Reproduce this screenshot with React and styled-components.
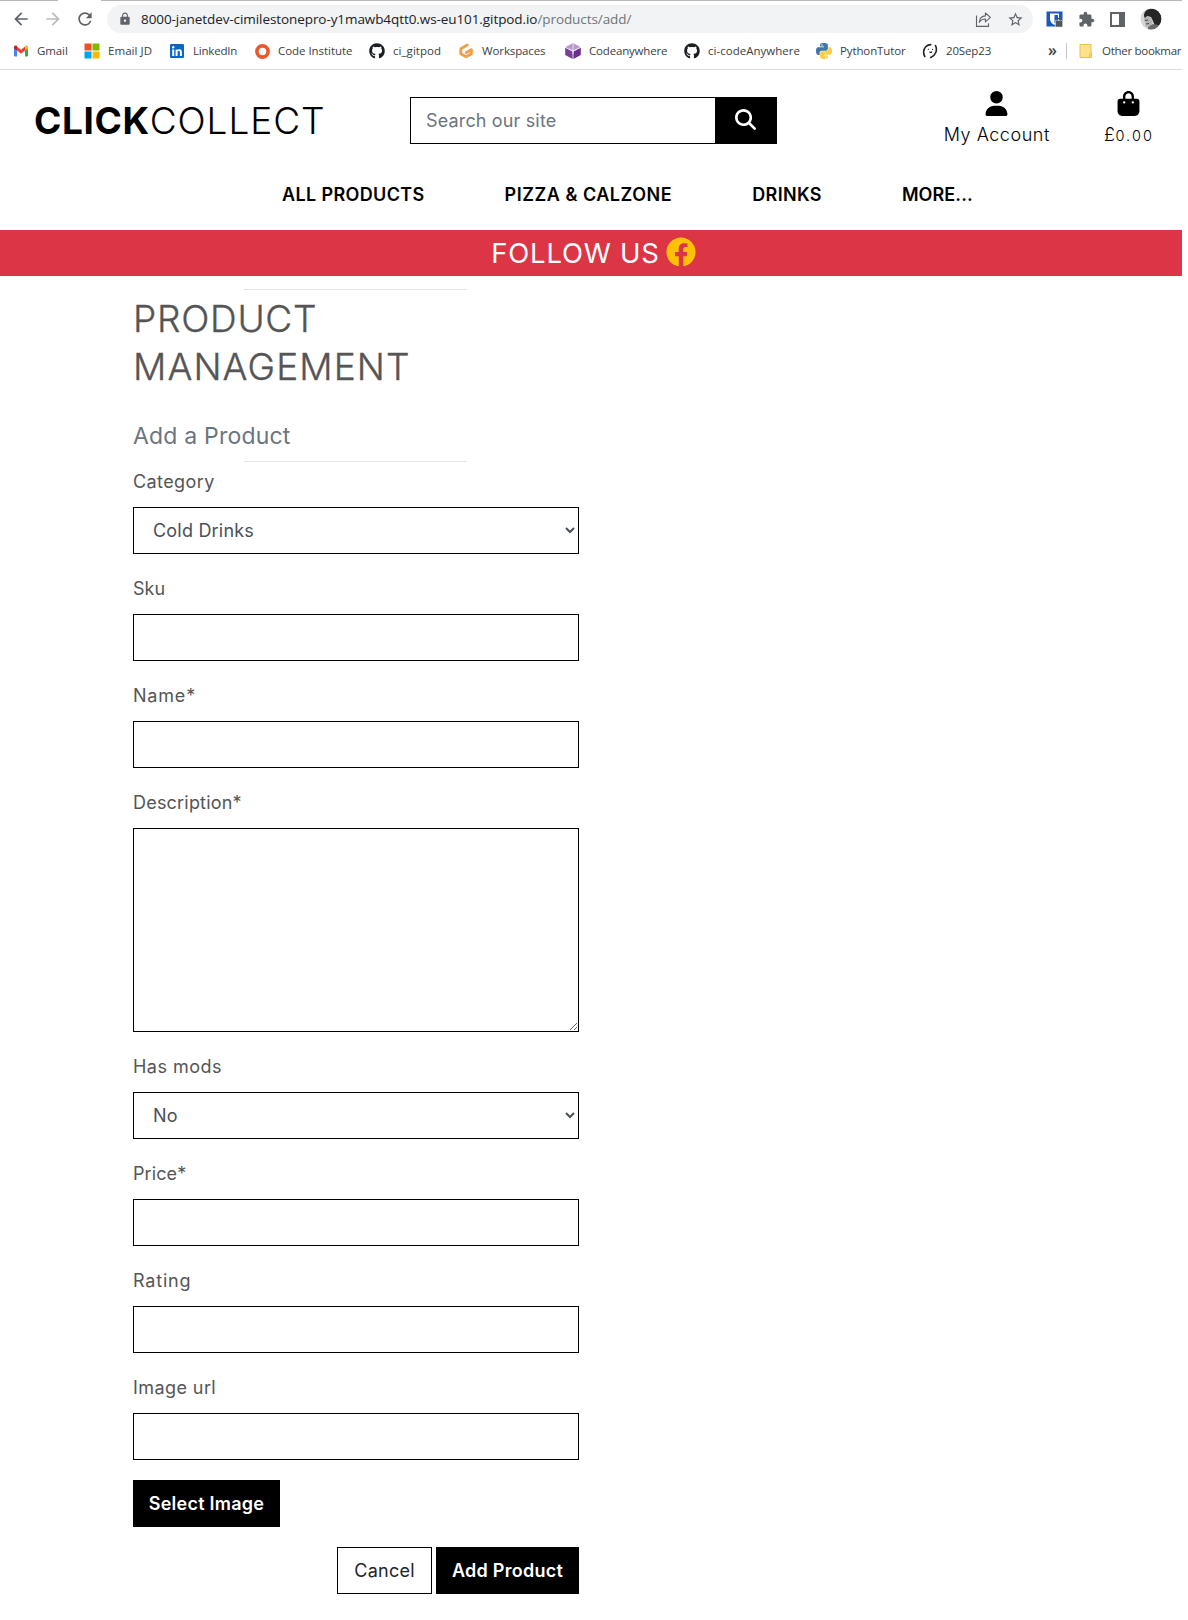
import React from "react";
import styled, { createGlobalStyle } from "styled-components";
import { FaFacebook, FaGithub } from "react-icons/fa";
import { FaUser, FaBagShopping, FaMagnifyingGlass } from "react-icons/fa6";
import {
  MdArrowBack,
  MdArrowForward,
  MdRefresh,
  MdLock,
  MdStarBorder,
  MdExtension,
} from "react-icons/md";

const GlobalStyle = createGlobalStyle`
  *, *::before, *::after { box-sizing: border-box; }
  body {
    margin: 0;
    background: #fff;
    color: #555;
    font-family: Inter, "Liberation Sans", sans-serif;
    font-size: 18px;
    line-height: 27px;
  }
`;

const Page = styled.div`
  width: 1182px;
  min-height: 1620px;
`;

/* ---------- browser bar ---------- */

const Browser = styled.header`
  height: 70px;
  overflow: hidden;
  border-bottom: 1px solid #d9dadc;
  font-family: "Open Sans", "Noto Sans", sans-serif;
`;

const TabEdge = styled.div`
  display: flex;
  justify-content: space-between;
  height: 1px;

  &::before,
  &::after {
    content: "";
    background: #b9b9b9;
    width: 58px;
  }
  &::after {
    width: 1081px;
  }
`;

const Toolbar = styled.div`
  display: flex;
  align-items: center;
  height: 28px;
  margin-top: 4px;
  color: #5f6368;
`;

const NavButtons = styled.div`
  display: flex;
  gap: 12px;
  width: 107px;
  padding-left: 11px;

  svg {
    width: 20px;
    height: 20px;
  }
  svg:nth-child(2) {
    color: #babcbe;
  }
`;

const AddressBar = styled.div`
  display: flex;
  align-items: center;
  width: 926px;
  height: 28px;
  padding: 0 9px 0 11px;
  border-radius: 14px;
  background: #f1f3f4;
`;

const Url = styled.div`
  flex: 1;
  margin-left: 9px;
  font-size: 13.5px;
  line-height: 20px;
  letter-spacing: -0.08px;
  color: #202124;

  span {
    color: #70757a;
  }
`;

const AddressActions = styled.div`
  display: flex;
  align-items: center;
  gap: 15px;
`;

const Extensions = styled.div`
  display: flex;
  align-items: center;
  gap: 15px;
  padding-left: 13px;
`;

const Bookmarks = styled.div`
  display: flex;
  align-items: center;
  height: 36px;
  padding-left: 13px;
  font-size: 11.5px;
  line-height: 16px;
  color: #3c4043;
  white-space: nowrap;
`;

const Bookmark = styled.div`
  display: flex;
  flex: none;
  align-items: center;
  gap: 8px;
  width: ${(p) => p.$w}px;
  letter-spacing: ${(p) => p.$ls || 0}px;

  svg {
    flex: none;
    width: 16px;
    height: 16px;
  }
`;

const More = styled.span`
  width: 19px;
  font-size: 16px;
  font-weight: 600;
  line-height: 14px;
  padding-bottom: 3px;
`;

const Divider = styled.span`
  width: 1px;
  height: 16px;
  margin-right: 11px;
  background: #c6c9cc;
`;

/* ---------- shop header ---------- */

const SiteHeader = styled.div`
  height: 160px;
  padding-top: 27px;
  color: #000;
`;

const HeaderRow = styled.div`
  display: grid;
  grid-template-columns: 376px 367px 1fr;
  grid-template-rows: 47px;
  padding: 0 28px 0 34px;
`;

const Logo = styled.div`
  display: flex;
  align-items: center;
  height: 46px;
  font-size: 37px;
  font-weight: 300;
  letter-spacing: 0.95px;

  strong {
    font-weight: 700;
    letter-spacing: 0.6px;
  }
`;

const SearchForm = styled.form`
  display: flex;
`;

const SearchInput = styled.input`
  flex: 1;
  min-width: 0;
  padding: 0 15px;
  border: 1px solid #000;
  border-right: 0;
  border-radius: 0;
  font: inherit;
  letter-spacing: 0.15px;
  color: #000;

  &::placeholder {
    color: #6c757d;
    opacity: 1;
  }
`;

const SearchButton = styled.button`
  display: flex;
  align-items: center;
  justify-content: center;
  width: 62px;
  padding: 0 1px 2px 0;
  border: 0;
  background: #000;
  color: #fff;

  svg {
    width: 21px;
    height: 21px;
  }
`;

const Actions = styled.div`
  display: flex;
  justify-content: flex-end;
  gap: 54px;
  margin-top: -6px;
  font-weight: 300;
`;

const Action = styled.a`
  display: flex;
  flex-direction: column;
  align-items: center;
  letter-spacing: 0.55px;

  svg {
    flex: none;
    width: 25px;
    height: 25px;
    margin-bottom: 5px;
  }
`;

const Amount = styled.span`
  font-size: 14.5px;
  letter-spacing: 2.1px;
`;

const MainNav = styled.nav`
  display: flex;
  gap: 80px;
  margin-top: 37px;
  padding-left: 282px;
  font-weight: 600;
`;

const NavLink = styled.a`
  letter-spacing: ${(p) => p.$ls}px;
`;

const Banner = styled.div`
  display: flex;
  align-items: center;
  justify-content: center;
  gap: 6px;
  height: 46px;
  padding-left: 27px;
  padding-right: 22px;
  background: #dc3545;
  color: #fff;
  font-size: 27.5px;
  letter-spacing: 0.75px;

  svg {
    width: 30px;
    height: 30px;
    margin-bottom: 2px;
    color: #ffc107;
  }
`;

/* ---------- product form ---------- */

const Content = styled.main`
  width: 446px;
  margin-left: 133px;
  padding-top: 13px;
`;

const Rule = styled.hr`
  width: 50%;
  height: 1px;
  margin: 0 0 0 111px;
  border: 0;
  background: #e4e4e4;
`;

const Title = styled.h2`
  width: 320px;
  margin: 5px 0 0;
  font-size: 37px;
  font-weight: 300;
  line-height: 48px;
  letter-spacing: 1.1px;
  color: #555;
  -webkit-text-stroke: 0.35px #555;

  span {
    letter-spacing: 0.75px;
  }
`;

const Subtitle = styled.h5`
  margin: 31px 0 11px;
  font-size: 23px;
  font-weight: 400;
  line-height: 28px;
  letter-spacing: 0.2px;
  color: #6c757d;
`;

const Form = styled.form`
  padding-top: 6px;
`;

const Field = styled.div`
  display: flex;
  flex-direction: column;
  gap: 12px;
  margin-bottom: ${(p) => p.$gap ?? 21}px;
`;

const Label = styled.label`
  letter-spacing: ${(p) => p.$ls}px;
`;

const Input = styled.input`
  height: 47px;
  padding: 0 15px;
  border: 1px solid #000;
  border-radius: 0;
  background: #fff;
  color: #495057;
  font: inherit;
`;

const Select = styled(Input).attrs({ as: "select" })`
  letter-spacing: 0.2px;
`;

const Textarea = styled(Input).attrs({ as: "textarea" })`
  display: block;
  height: 204px;
  resize: both;
`;

const Button = styled.button`
  height: 47px;
  padding: 0;
  width: ${(p) => p.$w}px;
  border: 1px solid #000;
  border-radius: 0;
  background: ${(p) => (p.$outline ? "#fff" : "#000")};
  color: ${(p) => (p.$outline ? "#212529" : "#fff")};
  font: inherit;
  font-weight: ${(p) => (p.$outline ? 400 : 600)};
  letter-spacing: 0.25px;
`;

const Buttons = styled.div`
  display: flex;
  justify-content: flex-end;
  gap: 4px;
  margin-top: 20px;
`;

/* ---------- icons ---------- */

const GmailIcon = () => (
  <svg viewBox="0 0 16 16">
    <path d="M1 4v8.7c0 .5.4.8.8.8H4V7z" fill="#4285f4" />
    <path d="M15 4v8.7c0 .5-.4.8-.8.8H12V7z" fill="#34a853" />
    <path d="M4 3.6 8 6.7l4-3.1v4L8 10.7 4 7.6z" fill="#ea4335" />
    <path d="M1 4.5c0-1.8 1.8-2.4 3-1.4v4.5L1 5.4z" fill="#c5221f" />
    <path d="M15 4.5c0-1.8-1.8-2.4-3-1.4v4.5l3-2.2z" fill="#fbbc04" />
  </svg>
);

const MicrosoftIcon = () => (
  <svg viewBox="0 0 16 16">
    <path d="M.5.5h7v7h-7z" fill="#f25022" />
    <path d="M8.5.5h7v7h-7z" fill="#7fba00" />
    <path d="M.5 8.5h7v7h-7z" fill="#00a4ef" />
    <path d="M8.5 8.5h7v7h-7z" fill="#ffb900" />
  </svg>
);

const LinkedInIcon = () => (
  <svg viewBox="0 0 16 16">
    <rect x="1" y="1" width="14" height="14" rx="1.2" fill="#0a66c2" />
    <circle cx="4.2" cy="4.3" r="1.2" fill="#fff" />
    <path d="M3.2 6.4h2V13h-2zM6.6 6.4h1.9v.9c.9-1.6 4.4-1.6 4.4 1.5V13h-2V9.5c0-2-2.3-1.8-2.3 0V13h-2z" fill="#fff" />
  </svg>
);

const RingIcon = () => (
  <svg viewBox="0 0 16 16">
    <circle cx="8.5" cy="8.5" r="5.6" fill="none" stroke="#e8572f" strokeWidth="3.6" />
  </svg>
);

const GitpodIcon = () => (
  <svg viewBox="0 0 16 16" fill="none" stroke="#f0a04b" strokeWidth="2.9" strokeLinecap="round" strokeLinejoin="round">
    <path d="M9.3 2 2.8 5.7v5L8 13.8l5.4-3.1V6.7L8.3 9.5" />
  </svg>
);

const CubeIcon = () => (
  <svg viewBox="0 0 16 16">
    <path d="M8 0 15.5 4 8 8 .5 4z" fill="#b79acb" />
    <path d="M.2 4.8 7.6 8.6V16L.2 12z" fill="#7a3f98" />
    <path d="M15.8 4.8 8.4 8.6V16l7.4-4z" fill="#6b3089" />
    <path d="M8 0v8M8 8l-4-2M8 8l4-2M8 8v3" stroke="#efe4f5" strokeWidth=".9" />
  </svg>
);

const snake =
  "M14.25.18l.9.2.73.26.59.3.45.32.34.34.25.34.16.33.1.3.04.26.02.2-.01.13V8.5l-.05.63-.13.55-.21.46-.26.38-.3.31-.33.25-.35.19-.35.14-.33.1-.3.07-.26.04-.21.02H8.77l-.69.05-.59.14-.5.22-.41.27-.33.32-.27.35-.2.36-.15.37-.1.35-.07.32-.04.27-.02.21v3.06H3.17l-.21-.03-.28-.07-.32-.12-.35-.18-.36-.26-.36-.36-.35-.46-.32-.59-.28-.73-.21-.88-.14-1.05-.05-1.23.06-1.22.16-1.04.24-.87.32-.71.36-.57.4-.44.42-.33.42-.24.4-.16.36-.1.32-.05.24-.01h.16l.06.01h8.16v-.83H6.18l-.01-2.75-.02-.37.05-.34.11-.31.17-.28.25-.26.31-.23.38-.2.44-.18.51-.15.58-.12.64-.1.71-.06.77-.04.84-.02 1.27.05z";

const PythonIcon = () => (
  <svg viewBox="0 0 24 24">
    <path d={snake} fill="#3f77a8" />
    <path d={snake} fill="#f9cf47" transform="rotate(180 12 12)" />
    <circle cx="9" cy="3" r="1" fill="#fff" />
    <circle cx="15" cy="21" r="1" fill="#fff" />
  </svg>
);

const SwirlIcon = () => (
  <svg viewBox="0 0 16 16" fill="none" stroke="#222" strokeWidth="1.6" strokeLinecap="round">
    <path d="M8.8 1.6C5 1.600 1.600 5 1.600 9c0 1.800.4 3.200 1.200 4.500" />
    <path d="M13.500 2.500c2.200 4.500.2 10-4.800 12" />
    <path d="M6.300 6.200v.3M7.800 9c.5.500 1.300.5 1.800 0M10.600 6.200v.3" strokeWidth="1.1" />
  </svg>
);

const FolderIcon = () => (
  <svg viewBox="0 0 16 16">
    <path d="M2 1.5h11v13H2z" fill="#ffe28a" stroke="#e5c252" />
    <path d="M11 14.5 12.2 10h1.3v4.5z" fill="#f6d264" stroke="#e5c252" strokeWidth=".8" />
  </svg>
);

const ShareIcon = () => (
  <svg width="17" height="17" viewBox="0 0 17 17" fill="none" stroke="#5f6368" strokeWidth="1.1">
    <path d="M1.5 4.5v10.900h12v-3.200" />
    <path d="M4.3 11.3C4.7 7.3 7 5 10.4 4.9V2l5 4.4-5 4.4V8c-2.6 0-4.7 1-6.1 3.3z" strokeLinejoin="round" />
  </svg>
);

const ShieldIcon = () => (
  <svg width="17" height="17" viewBox="0 0 17 17">
    <path d="M.5.5h16v15H.5z" fill="#1a56c4" />
    <path d="M4 2.500h9V8c0 3-2.200 4.800-4.500 6C6.200 12.800 4 11 4 8z" fill="#fff" />
    <path d="M8.500 4H12v4c0 2-1.500 3.200-3.500 4.300z" fill="#1a56c4" />
    <path d="M9.500 9.500h7V16h-7z" fill="#555" stroke="#dfe5ee" strokeWidth=".6" />
    <path d="M11.200 9.500c0-2.800 3.600-2.800 3.600 0" fill="none" stroke="#555" strokeWidth="1.2" />
  </svg>
);

const SidePanelIcon = () => (
  <svg width="15" height="15" viewBox="0 0 15 15">
    <path d="M1 1h13v13H1z" fill="#fff" stroke="#5f6368" strokeWidth="2" />
    <path d="M9 1h5v13H9z" fill="#5f6368" />
  </svg>
);

const AvatarIcon = () => (
  <svg width="22" height="22" viewBox="0 0 22 22">
    <defs>
      <clipPath id="avatar-clip">
        <circle cx="11" cy="11" r="10.5" />
      </clipPath>
    </defs>
    <g clipPath="url(#avatar-clip)">
      <path d="M0 0h22v22H0z" fill="#d5d5d5" />
      <path d="M4 8C4 2 9 0 14 1c6 1 9 8 7 13-1 3-3 5-6 4l-2-5-2-4-4-1-2 3z" fill="#262626" />
      <path d="M4 11c1-2 4-3.500 6-2l2.500 5-1.500 4-5 1-1-4z" fill="#b4b4b4" />
      <path d="M5 12.500 8 12M6 16l3-.5" stroke="#444" />
      <path d="m8 19 5-3 5 1v5H8z" fill="#6a6a6a" />
    </g>
  </svg>
);

/* ---------- data ---------- */

const bookmarks = [
  { label: "Gmail", icon: <GmailIcon />, w: 71, ls: -0.1 },
  { label: "Email JD", icon: <MicrosoftIcon />, w: 85, ls: 0.05 },
  { label: "LinkedIn", icon: <LinkedInIcon />, w: 85, ls: -0.2 },
  { label: "Code Institute", icon: <RingIcon />, w: 115, ls: -0.05 },
  { label: "ci_gitpod", icon: <FaGithub color="#1b1f23" />, w: 89, ls: 0.05 },
  { label: "Workspaces", icon: <GitpodIcon />, w: 107, ls: -0.12 },
  { label: "Codeanywhere", icon: <CubeIcon />, w: 119, ls: -0.18 },
  { label: "ci-codeAnywhere", icon: <FaGithub color="#1b1f23" />, w: 132, ls: 0.02 },
  { label: "PythonTutor", icon: <PythonIcon />, w: 106, ls: -0.12 },
  { label: "20Sep23", icon: <SwirlIcon />, w: 126, ls: -0.15 },
];

const navLinks = [
  { label: "ALL PRODUCTS", ls: 0.36 },
  { label: "PIZZA & CALZONE", ls: 0.52 },
  { label: "DRINKS", ls: 0.35 },
  { label: "MORE...", ls: 0.1 },
];

const fields = [
  { id: "category", label: "Category", ls: 0.4, options: ["Cold Drinks"] },
  { id: "sku", label: "Sku", ls: 0 },
  { id: "name", label: "Name*", ls: 0.8 },
  { id: "description", label: "Description*", ls: 0.2, multiline: true },
  { id: "mods", label: "Has mods", ls: 0.48, options: ["No"] },
  { id: "price", label: "Price*", ls: 0.1 },
  { id: "rating", label: "Rating", ls: 0.8 },
  { id: "image", label: "Image url", ls: 0.42, gap: 20 },
];

function Control({ field }) {
  if (field.options) {
    return (
      <Select id={field.id}>
        {field.options.map((o) => (
          <option key={o}>{o}</option>
        ))}
      </Select>
    );
  }
  return field.multiline ? <Textarea id={field.id} /> : <Input id={field.id} />;
}

export default function App() {
  return (
    <>
      <GlobalStyle />
      <Page>
        <Browser>
          <TabEdge />
          <Toolbar>
            <NavButtons>
              <MdArrowBack />
              <MdArrowForward />
              <MdRefresh />
            </NavButtons>
            <AddressBar>
              <MdLock size={14} />
              <Url>
                8000-janetdev-cimilestonepro-y1mawb4qtt0.ws-eu101.gitpod.io
                <span>/products/add/</span>
              </Url>
              <AddressActions>
                <ShareIcon />
                <MdStarBorder size={17} />
              </AddressActions>
            </AddressBar>
            <Extensions>
              <ShieldIcon />
              <MdExtension size={17} />
              <SidePanelIcon />
              <AvatarIcon />
            </Extensions>
          </Toolbar>
          <Bookmarks>
            {bookmarks.map((b) => (
              <Bookmark key={b.label} $w={b.w} $ls={b.ls}>
                {b.icon}
                {b.label}
              </Bookmark>
            ))}
            <More>»</More>
            <Divider />
            <Bookmark $w={104} $ls={-0.28}>
              <FolderIcon />
              Other bookmar
            </Bookmark>
          </Bookmarks>
        </Browser>

        <SiteHeader>
          <HeaderRow>
            <Logo>
              <strong>CLICK</strong>COLLECT
            </Logo>
            <SearchForm>
              <SearchInput placeholder="Search our site" />
              <SearchButton type="button" aria-label="Search">
                <FaMagnifyingGlass />
              </SearchButton>
            </SearchForm>
            <Actions>
              <Action>
                <FaUser />
                My Account
              </Action>
              <Action>
                <FaBagShopping />
                <span>
                  £<Amount>0.00</Amount>
                </span>
              </Action>
            </Actions>
          </HeaderRow>
          <MainNav>
            {navLinks.map((l) => (
              <NavLink key={l.label} $ls={l.ls}>
                {l.label}
              </NavLink>
            ))}
          </MainNav>
        </SiteHeader>

        <Banner>
          FOLLOW US
          <FaFacebook />
        </Banner>

        <Content>
          <Rule />
          <Title>
            <span>PRODUCT</span> MANAGEMENT
          </Title>
          <Subtitle>Add a Product</Subtitle>
          <Rule />
          <Form>
            {fields.map((f) => (
              <Field key={f.id} $gap={f.gap}>
                <Label htmlFor={f.id} $ls={f.ls}>
                  {f.label}
                </Label>
                <Control field={f} />
              </Field>
            ))}
            <Button type="button" $w={147}>
              Select Image
            </Button>
            <Buttons>
              <Button type="button" $w={95} $outline>
                Cancel
              </Button>
              <Button type="button" $w={143}>
                Add Product
              </Button>
            </Buttons>
          </Form>
        </Content>
      </Page>
    </>
  );
}
